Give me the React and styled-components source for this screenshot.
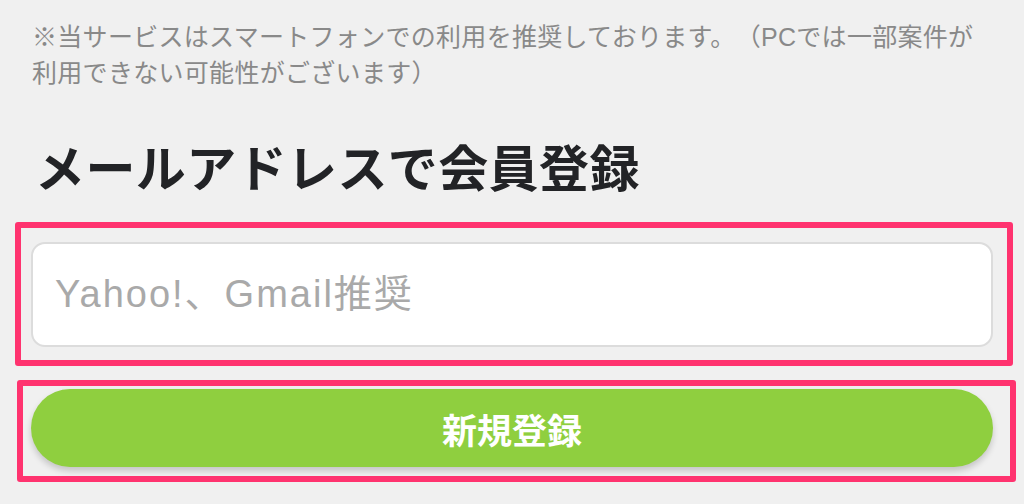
import React from 'react';
import styled, { createGlobalStyle } from 'styled-components';

const GlobalStyle = createGlobalStyle`
  body {
    margin: 0;
    background-color: #f0f0f0;
    font-family: "Liberation Sans", "Noto Sans CJK JP", sans-serif;
  }
`;

export default function App() {
  return (
    <Page>
      <GlobalStyle />
      <Notice>
        ※当サービスはスマートフォンでの利用を推奨しております。（PCでは一部案件が利用できない可能性がございます）
      </Notice>
      <Heading>メールアドレスで会員登録</Heading>
      <Highlight $left={15} $width={998} $top={27} $pad="14px 14px 13px 10px">
        <EmailInput type="email" placeholder="Yahoo!、Gmail推奨" />
      </Highlight>
      <Highlight $left={17} $width={999} $top={14} $pad="3px 17px 9px 8px">
        <SubmitButton>新規登録</SubmitButton>
      </Highlight>
    </Page>
  );
}

const Page = styled.div`
  width: 1024px;
  height: 504px;
  overflow: hidden;
  padding-top: 19px;
  box-sizing: border-box;
`;

const Notice = styled.p`
  margin: 0;
  padding: 0 32px;
  font-size: 25px;
  line-height: 36px;
  letter-spacing: 0.3px;
  text-spacing-trim: space-all;
  color: #898989;
`;

const Heading = styled.h1`
  margin: 44px 0 0 0;
  padding-left: 35px;
  font-family: "Noto Sans CJK JP", sans-serif;
  font-size: 50px;
  line-height: 60px;
  font-weight: 700;
  letter-spacing: 0.4px;
  color: #222326;
`;

const Highlight = styled.div`
  box-sizing: border-box;
  width: ${p => p.$width}px;
  margin: ${p => p.$top}px 0 0 ${p => p.$left}px;
  padding: ${p => p.$pad};
  border: 6px solid #ff336f;
  border-radius: 3px;
`;

const EmailInput = styled.input`
  display: block;
  box-sizing: border-box;
  width: 962px;
  height: 105px;
  padding: 0 22px;
  border: 2px solid #dcdcdc;
  border-radius: 14px;
  background-color: #fff;
  font-family: "Liberation Sans", "Noto Sans CJK JP", sans-serif;
  font-size: 38px;
  letter-spacing: 2px;
  color: #333;
  outline: none;

  &::placeholder {
    color: #a9a9a9;
  }
`;

const SubmitButton = styled.button`
  display: block;
  width: 962px;
  height: 78px;
  border: none;
  border-radius: 39px;
  background-color: #8fcf3f;
  box-shadow: 0 4px 6px rgba(0, 0, 0, 0.18);
  color: #fff;
  font-family: "Noto Sans CJK JP", sans-serif;
  font-size: 35px;
  font-weight: 700;
  cursor: pointer;
`;
